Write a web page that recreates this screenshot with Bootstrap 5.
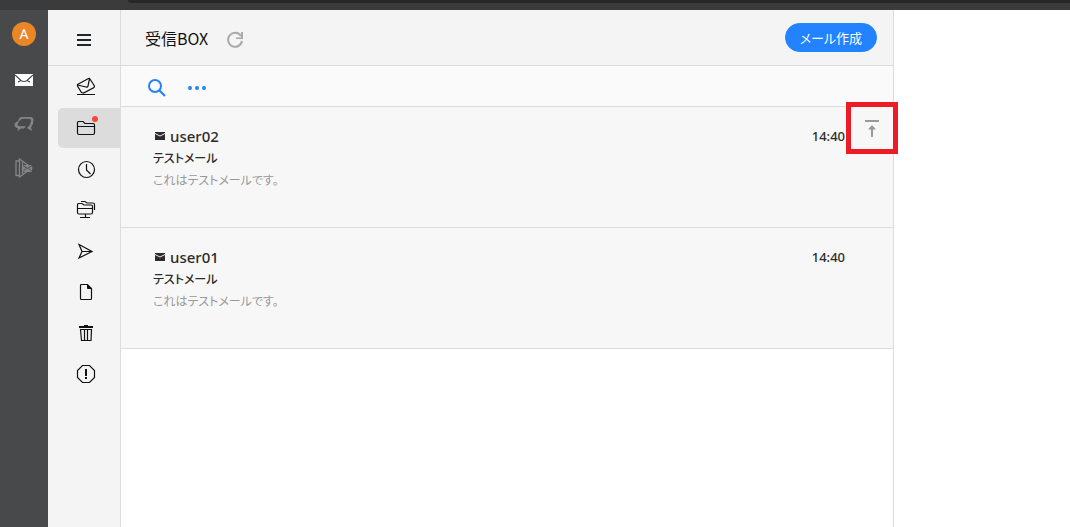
<!DOCTYPE html>
<html lang="ja">
<head>
<meta charset="utf-8">
<meta name="viewport" content="width=device-width, initial-scale=1">
<title>受信BOX</title>
<link href="https://cdn.jsdelivr.net/npm/bootstrap@5.3.0/dist/css/bootstrap.min.css" rel="stylesheet">
<style>
  body { font-family: "Noto Sans", "Noto Sans CJK JP", sans-serif; font-size: 14px; line-height: 22px; color: #111; background: #fff; }
  svg { display: block; fill: none; stroke: currentColor; }
  .solid { fill: currentColor; stroke: none; }
  .jp { font-family: "Noto Sans CJK JP", sans-serif; font-feature-settings: "palt"; }
  .top-strip { height: 10px; background: #3b3b3b; }
  .top-strip div { height: 3px; margin-left: 128px; background: #282828; border-bottom-left-radius: 6px; }
  .rail { width: 48px; background: #48494b; padding-top: 12px; }
  .avatar { width: 24px; height: 24px; background: #e98625; color: #fff; margin-bottom: 12px; }
  .rail a { width: 48px; height: 44px; color: #858585; }
  .rail a.current { color: #fff; }
  .side { width: 73px; background: #f4f4f4; border-right: 1px solid #dcdcdc; }
  .head { height: 56px; background: #f4f4f4; border-bottom: 1px solid #dcdcdc; }
  .side .nav { gap: 1px; padding: 1px 0 0 10px; }
  .side .nav-link { height: 40px; padding: 0 24px 0 18px; color: #111; border-radius: 5px 0 0 5px; }
  .side .nav-link.active { background: #dcdcdc; }
  .dot { width: 6px; height: 6px; background: #f94839; top: 8px; left: 34px; }
  .mailbox { border-right: 1px solid #dcdcdc; min-width: 0; }
  .mailbox .head { gap: 17px; }
  .mailbox h1 { font-size: 16px; line-height: 24px; color: #111; }
  .tools { height: 41px; background: #fafafa; border-bottom: 1px solid #dcdcdc; padding: 3px 0 0 25px; gap: 19px; }
  .tools .btn, .head .btn-plain, .pin { --bs-btn-padding-x: 0; --bs-btn-padding-y: 0; --bs-btn-border-width: 0; }
  .tools .btn { color: #2382fb; }
  .mailbox .btn-plain { color: #aaa; }
  .compose { --bs-btn-bg: #2382ff; --bs-btn-border-color: #2382ff; --bs-btn-padding-y: 3px; --bs-btn-padding-x: 14px; --bs-btn-font-size: 13px; --bs-btn-line-height: 21px; margin-right: 16px; }
  .mail { min-height: 121px; background: #f7f7f7; border-bottom: 1px solid #dcdcdc; padding: 18px 48px 16px 32px; color: #2c2c2c; }
  .sender { font-size: 15px; font-weight: 500; line-height: 22px; }
  .sender svg { margin: 0 5px 0 2px; }
  .subject { font-size: 12px; font-weight: 500; }
  .excerpt { font-size: 12px; color: #999; }
  .time { font-size: 13px; font-weight: 500; }
  .pin { width: 52px; height: 52px; top: -5px; right: -5px; border: 5px solid #ed1c24; border-radius: 0; background: #f7f7f7; color: #999; }
  .reader { width: 176px; }
</style>
</head>
<body class="d-flex flex-column min-vh-100">
<div class="top-strip"><div></div></div>
<div class="d-flex flex-grow-1">
  <nav class="rail d-flex flex-column align-items-center flex-shrink-0" aria-label="アプリ">
    <div class="avatar rounded-circle d-flex align-items-center justify-content-center">A</div>
    <a href="#" class="current d-flex align-items-center justify-content-center" aria-label="メール">
      <svg width="18" height="12"><path class="solid" d="M0 0h18v12H0z"/><path stroke="#48494b" stroke-width="1.2" d="M0 1 6 6.500Q9 8.500 12 6.500L18 1M3 8l3-1.500M15 8l-3-1.500"/></svg>
    </a>
    <a href="#" class="d-flex align-items-center justify-content-center" aria-label="チャット">
      <svg width="20" height="16" viewBox="0 0 20 16"><path class="solid" fill-rule="evenodd" d="M7 1h9q3.500 0 3.500 3 0 4-2.500 7.500l1 3.500-5-3 2.500-2.500Q17.500 6 17 4q-.5-1.300-2-1.300H9Q6.500 2.700 6 4.500L4 5.500Q5 1.500 7 1z"/><path class="solid" d="M3 5.500h2.500Q3 7.500 3.500 9t3 1.300h5.500L10 12.500H7L3.500 15l.5-3Q.5 11.500.5 9q0-2.500 2.500-3.500z"/></svg>
    </a>
    <a href="#" class="d-flex align-items-center justify-content-center" aria-label="ビデオ">
      <svg width="18" height="20" viewBox="0 0 18 20"><path stroke-width="1.300" d="M4.500 1v18L17 10zM4.500 3H1v14.500h3.500M7.500 4v12"/><path class="solid" d="M8 7h9v7H8z"/><path stroke="#48494b" d="m8 7.500 4.500 3 4.500-3M8 13.500l3-3M17 13.500l-3-3"/></svg>
    </a>
  </nav>
  <aside class="side flex-shrink-0">
    <div class="head d-flex align-items-center justify-content-center">
      <button class="btn btn-plain text-dark" type="button" aria-label="メニュー"><svg class="mt-1" width="14" height="12" stroke-width="2"><path d="M0 1h14M0 6h14M0 11h14"/></svg></button>
    </div>
    <nav class="nav flex-column" aria-label="フォルダー">
      <a class="nav-link d-flex align-items-center" href="#" aria-label="全てのメール"><svg width="20" height="20"><path stroke-width="1.200" d="m1.500 7.500 11-6q1-.5 1.500.5l4.500 7-.5 1.500L7.500 16 5.500 15.500 1.500 9zM1.500 8l8.500 2q1.500.5 2-1L13.500 2"/><path stroke-width="1" d="M1 17.500h18"/></svg></a>
      <a class="nav-link active position-relative d-flex align-items-center" href="#" aria-label="受信BOX"><svg width="20" height="20"><path stroke-width="1.200" d="M2.500 3.500H7L9 5.500h8q1.500 0 1.500 1.500v8q0 1.500-1.500 1.500H3q-1.500 0-1.500-1.500V4.500q0-1 1-1zM1.500 8.500h17"/></svg><span class="dot position-absolute rounded-circle"></span></a>
      <a class="nav-link d-flex align-items-center" href="#" aria-label="最近"><svg width="20" height="20"><circle cx="10.500" cy="10.500" r="8" stroke-width="1.200"/><path stroke-width="1.200" d="M10.500 5v6l4 4"/></svg></a>
      <a class="nav-link d-flex align-items-center" href="#" aria-label="共有フォルダー"><svg width="20" height="20"><path stroke-width="1.200" d="M2.500 3.500H6L8 5h7q1.500 0 1.500 1.500v6q0 1.500-1.500 1.500H3q-1.500 0-1.500-1.500V4.500q0-1 1-1zM1.500 8.500h15M5 1.500h4L11 3h6q1.500 0 1.500 1.500V10M9.500 14v3M4 17.500h10"/></svg></a>
      <a class="nav-link d-flex align-items-center" href="#" aria-label="送信BOX"><svg width="20" height="20"><path stroke-width="1.200" d="m3 3.500 13 7-13 6.500 3-6.500z"/><path d="M6 10.500h10"/></svg></a>
      <a class="nav-link d-flex align-items-center" href="#" aria-label="下書き"><svg width="20" height="20"><path stroke-width="1.200" d="M5.500 2.500h6l4 4v10q0 1-1 1h-9q-1 0-1-1v-13q0-1 1-1z"/><path fill="currentColor" d="M11.500 2.500v4h4z"/></svg></a>
      <a class="nav-link d-flex align-items-center" href="#" aria-label="ゴミ箱"><svg width="20" height="20"><path stroke-width="2" d="M3 4h14"/><path stroke-width="1.200" d="M8 2.500h4M4.500 6.500h11L15 17.500H5.500zM8.500 7v10M11.500 7v10"/></svg></a>
      <a class="nav-link d-flex align-items-center" href="#" aria-label="迷惑メール"><svg width="20" height="20"><path stroke-width="1.200" d="M6.500 1.500h7l5 5v7l-5 5h-7l-5-5v-7z"/><path stroke-width="2" d="M10 5v7M10 13v2"/></svg></a>
    </nav>
  </aside>
  <main class="mailbox flex-grow-1">
    <header class="head d-flex align-items-center ps-4">
      <h1 class="jp fw-normal mb-0">受信BOX</h1>
      <button class="btn btn-plain" type="button" aria-label="更新"><svg class="mt-1" width="20" height="20"><path stroke-width="2" d="M17 11A7 7 0 1 1 16 6"/><path class="solid" d="M18 2v7h-7V7.500h5V2z"/></svg></button>
      <button class="btn btn-primary rounded-pill compose jp ms-auto" type="button">メール作成</button>
    </header>
    <div class="tools d-flex align-items-center" role="toolbar" aria-label="メール操作">
      <button class="btn" type="button" aria-label="検索"><svg width="22" height="22"><circle cx="9" cy="9" r="6" stroke-width="2"/><path stroke-width="2.200" d="m13.500 13.500 5.500 5.500"/></svg></button>
      <button class="btn" type="button" aria-label="その他"><svg class="solid" width="22" height="6"><circle cx="3" cy="3" r="2"/><circle cx="10" cy="3" r="2"/><circle cx="17" cy="3" r="2"/></svg></button>
    </div>
    <article class="mail position-relative d-flex justify-content-between">
      <div>
        <div class="sender d-flex align-items-center"><svg width="10" height="8"><path class="solid" d="M0 0h10v8H0z"/><path stroke="#eee" d="m0 1.500 5 2.500 5-2.500"/></svg>user02</div>
        <div class="subject jp">テストメール</div>
        <div class="excerpt jp">これはテストメールです。</div>
      </div>
      <time class="time">14:40</time>
      <button class="btn pin position-absolute d-flex align-items-center justify-content-center" type="button" aria-label="先頭に固定"><svg width="14" height="18"><path stroke-width="2" d="M0 2h14M7 18V8"/><path class="solid" d="m7 6 4 4.500H3z"/></svg></button>
    </article>
    <article class="mail d-flex justify-content-between">
      <div>
        <div class="sender d-flex align-items-center"><svg width="10" height="8"><path class="solid" d="M0 0h10v8H0z"/><path stroke="#eee" d="m0 1.500 5 2.500 5-2.500"/></svg>user01</div>
        <div class="subject jp">テストメール</div>
        <div class="excerpt jp">これはテストメールです。</div>
      </div>
      <time class="time">14:40</time>
    </article>
  </main>
  <section class="reader flex-shrink-0" aria-label="本文"></section>
</div>
<script src="https://cdn.jsdelivr.net/npm/bootstrap@5.3.0/dist/js/bootstrap.bundle.min.js"></script>
</body>
</html>
